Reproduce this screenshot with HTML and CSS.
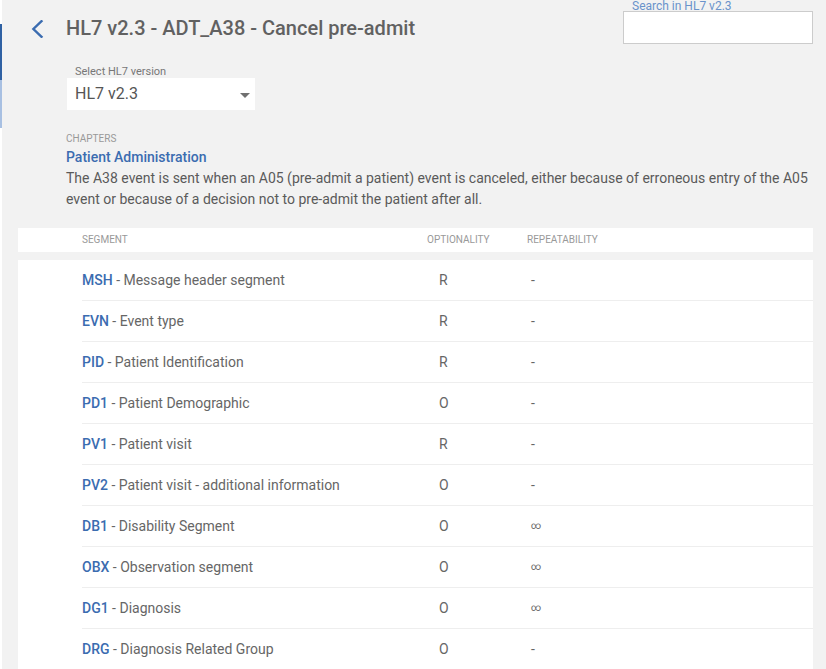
FILE: index.html
```html
<!DOCTYPE html>
<html lang="en">
<head>
<meta charset="utf-8">
<title>HL7 v2.3 - ADT_A38 - Cancel pre-admit</title>
<link rel="stylesheet" href="styles.css">
</head>
<body>
<div class="page">
  <div class="edge">
    <div class="edge-gap"></div>
    <div class="edge-active"></div>
    <div class="edge-light"></div>
  </div>
  <main class="main">
    <header class="topbar">
      <div class="title-wrap">
        <svg class="back" width="14" height="18" viewBox="0 0 14 18" aria-hidden="true">
          <path d="M11.5 1.2 L3.4 9 L11.5 16.8" fill="none" stroke="#3b6cb0" stroke-width="2.4" stroke-linecap="square" stroke-linejoin="miter"/>
        </svg>
        <h1 class="title">HL7 v2.3 - ADT_A38 - Cancel pre-admit</h1>
      </div>
      <div class="search">
        <label class="search-label" for="q">Search in HL7 v2.3</label>
        <input class="search-input" id="q" type="text">
      </div>
    </header>

    <section class="version">
      <div class="version-label">Select HL7 version</div>
      <div class="select">
        <span class="select-value">HL7 v2.3</span>
        <span class="caret"></span>
      </div>
    </section>

    <section class="intro">
      <div class="chapters">CHAPTERS</div>
      <div class="chapter-name">Patient Administration</div>
      <p class="desc">The A38 event is sent when an A05 (pre-admit a patient) event is canceled, either because of erroneous entry of the A05 event or because of a decision not to pre-admit the patient after all.</p>
    </section>

    <section class="table">
      <div class="thead">
        <div class="cols">
          <span>SEGMENT</span>
          <span>OPTIONALITY</span>
          <span>REPEATABILITY</span>
        </div>
      </div>
      <div class="tbody">
        <div class="cols row"><span><b>MSH</b> - Message header segment</span><span class="opt">R</span><span class="rep">-</span></div>
        <div class="cols row"><span><b>EVN</b> - Event type</span><span class="opt">R</span><span class="rep">-</span></div>
        <div class="cols row"><span><b>PID</b> - Patient Identification</span><span class="opt">R</span><span class="rep">-</span></div>
        <div class="cols row"><span><b>PD1</b> - Patient Demographic</span><span class="opt">O</span><span class="rep">-</span></div>
        <div class="cols row"><span><b>PV1</b> - Patient visit</span><span class="opt">R</span><span class="rep">-</span></div>
        <div class="cols row"><span><b>PV2</b> - Patient visit - additional information</span><span class="opt">O</span><span class="rep">-</span></div>
        <div class="cols row"><span><b>DB1</b> - Disability Segment</span><span class="opt">O</span><span class="rep inf">∞</span></div>
        <div class="cols row"><span><b>OBX</b> - Observation segment</span><span class="opt">O</span><span class="rep inf">∞</span></div>
        <div class="cols row"><span><b>DG1</b> - Diagnosis</span><span class="opt">O</span><span class="rep inf">∞</span></div>
        <div class="cols row"><span><b>DRG</b> - Diagnosis Related Group</span><span class="opt">O</span><span class="rep">-</span></div>
      </div>
    </section>
  </main>
</div>
</body>
</html>
```

FILE: styles.css
```css
html, body {
  margin: 0;
  padding: 0;
  background: #f2f2f2;
  font-family: Roboto, "Liberation Sans", Arial, sans-serif;
  color: #5f5f5f;
}

.page {
  display: flex;
  min-height: 669px;
}

.edge {
  width: 2px;
  flex: none;
  background: #ffffff;
  display: flex;
  flex-direction: column;
}

.edge-gap {
  height: 24px;
}

.edge-active {
  height: 56px;
  background: #2f61a3;
}

.edge-light {
  height: 48px;
  background: #a8c0e2;
}

.main {
  flex: 1;
  min-width: 0;
}

.topbar {
  display: flex;
  justify-content: space-between;
  align-items: flex-start;
}

.title-wrap {
  display: flex;
  align-items: center;
  padding: 16px 0 0 28px;
  height: 24px;
}

.back {
  display: block;
  margin-right: 22px;
  margin-top: 1px;
}

.title {
  margin: 0;
  font-size: 20px;
  line-height: 24px;
  font-weight: 500;
  color: #616161;
}

.search {
  display: flex;
  flex-direction: column;
  margin-right: 13px;
}

.search-label {
  font-size: 12px;
  line-height: 12px;
  height: 11px;
  color: #6a93cb;
  padding-left: 9px;
}

.search-input {
  box-sizing: border-box;
  width: 190px;
  height: 33px;
  margin: 0;
  border: 1px solid #cccccc;
  background: #ffffff;
  outline: none;
  font: inherit;
}

.version {
  margin: 21px 0 0 65px;
}

.version-label {
  font-size: 11px;
  line-height: 13px;
  color: #777777;
  padding-left: 8px;
}

.select {
  box-sizing: border-box;
  width: 188px;
  height: 32px;
  background: #ffffff;
  display: flex;
  align-items: center;
  justify-content: space-between;
  padding: 0 5px 0 8px;
}

.select-value {
  font-size: 16px;
  line-height: 32px;
  color: #555555;
}

.caret {
  width: 0;
  height: 0;
  border-left: 5px solid transparent;
  border-right: 5px solid transparent;
  border-top: 5px solid #707070;
  margin-top: 2px;
}

.intro {
  margin: 23px 0 0 64px;
  padding-right: 13px;
}

.chapters {
  font-size: 10px;
  line-height: 12px;
  color: #999999;
}

.chapter-name {
  margin-top: 2px;
  font-size: 14px;
  line-height: 20px;
  font-weight: 500;
  color: #3b6cb0;
}

.desc {
  margin: 1px 0 0 0;
  font-size: 14px;
  line-height: 21px;
  color: #5a5a5a;
}

.table {
  margin: 18px 13px 0 16px;
}

.cols {
  display: grid;
  grid-template-columns: 345px 100px 1fr;
}

.thead {
  background: #ffffff;
  height: 24px;
  padding-left: 64px;
}

.thead span {
  font-size: 10px;
  line-height: 24px;
  color: #999999;
}

.tbody {
  margin-top: 8px;
  background: #ffffff;
  padding-left: 64px;
  min-height: 420px;
}

.row {
  height: 40px;
  border-bottom: 1px solid #eeeeee;
  font-size: 14px;
  line-height: 40px;
  color: #666666;
}

.row b {
  font-weight: 500;
  color: #3b6cb0;
}

.opt {
  padding-left: 12px;
}

.rep {
  padding-left: 4px;
}

.inf {
  font-size: 10px;
}
```
